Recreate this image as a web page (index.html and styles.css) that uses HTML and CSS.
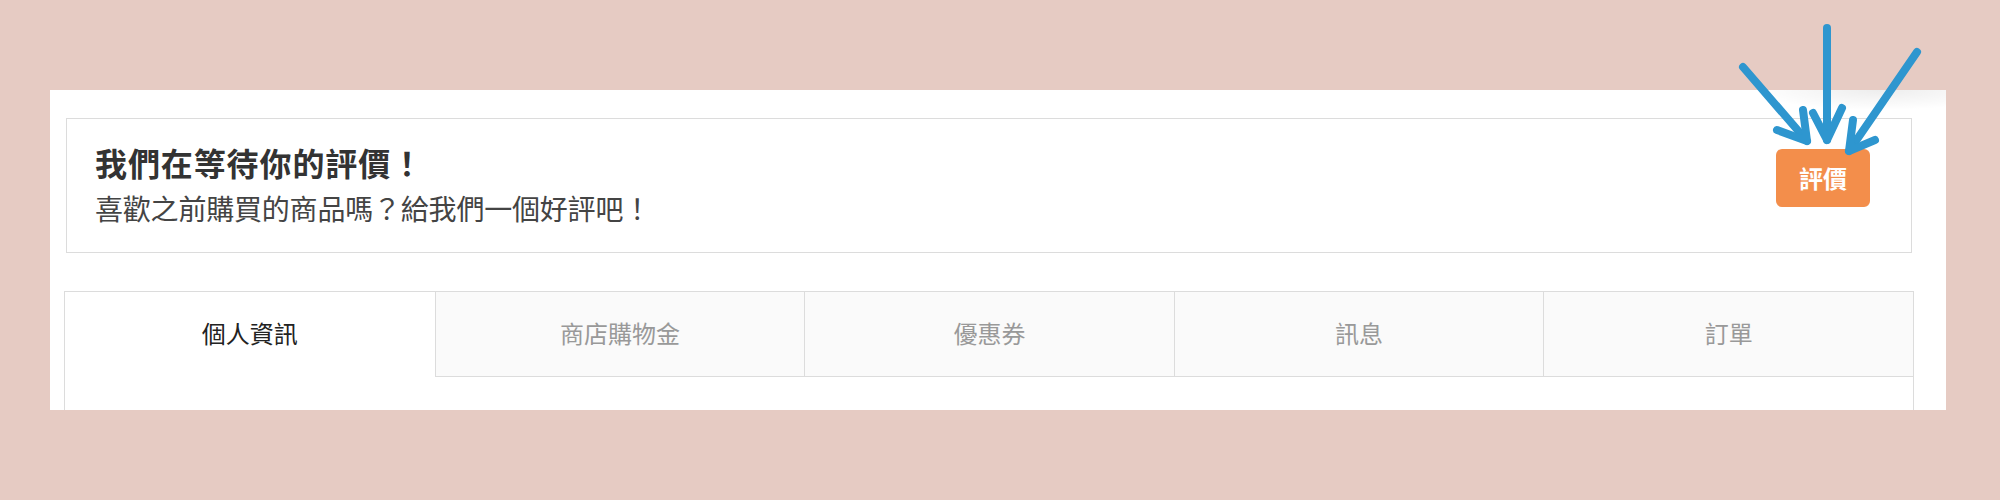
FILE: index.html
```html
<!DOCTYPE html>
<html lang="zh-Hant">
<head>
<meta charset="utf-8">
<title>會員中心</title>
<link rel="stylesheet" href="styles.css">
</head>
<body>
<div class="page">
  <div class="panel">
    <div class="review-card">
      <div class="review-text">
        <div class="review-title">我們在等待你的評價！</div>
        <div class="review-sub">喜歡之前購買的商品嗎？給我們一個好評吧！</div>
      </div>
      <button class="review-btn">評價</button>
    </div>
    <div class="tabs">
      <div class="tab tab-active">個人資訊</div>
      <div class="tab">商店購物金</div>
      <div class="tab">優惠券</div>
      <div class="tab">訊息</div>
      <div class="tab">訂單</div>
    </div>
    <div class="tab-body"></div>
  </div>
  <div class="arrow-shadow"></div>
  <svg class="arrows" viewBox="1730 20 200 145" width="200" height="145" aria-hidden="true">
    <g fill="none" stroke="#2e96cf" stroke-width="8" stroke-linecap="round" stroke-linejoin="round">
      <path d="M1743 67 L1807 141"/>
      <path d="M1803 110 L1807 141 L1777 130"/>
      <path d="M1827 28 L1827 140"/>
      <path d="M1813 113 L1827 140 L1842 108"/>
      <path d="M1917 52 L1849 151"/>
      <path d="M1853 120 L1849 151 L1875 140"/>
    </g>
  </svg>
</div>
</body>
</html>
```
FILE: styles.css
```css
html, body {
  margin: 0;
  padding: 0;
}

body {
  background: #e6cbc3;
  font-family: "Noto Sans CJK TC", "Noto Sans", sans-serif;
  overflow: hidden;
}

.page {
  position: relative;
  width: 2000px;
  height: 500px;
  padding: 90px 54px 0 50px;
  box-sizing: border-box;
}

.panel {
  background: #ffffff;
  height: 320px;
  overflow: hidden;
  box-sizing: border-box;
  padding: 28px 32px 0 14px;
  display: flex;
  flex-direction: column;
}

.review-card {
  margin: 0 2px;
  border: 1px solid #dcdcdc;
  display: flex;
  justify-content: space-between;
  align-items: flex-start;
  padding: 20px 41px 21px 28px;
}

.review-title {
  font-size: 32px;
  font-weight: 700;
  line-height: 46px;
  letter-spacing: 0.9px;
  color: #333333;
}

.review-sub {
  font-size: 28px;
  line-height: 46px;
  letter-spacing: -0.2px;
  color: #444444;
}

.review-btn {
  margin-top: 10px;
  width: 94px;
  height: 58px;
  border: none;
  border-radius: 6px;
  background: #f38e4b;
  color: #ffffff;
  font-family: inherit;
  font-size: 24px;
  font-weight: 700;
  padding: 0;
  line-height: 58px;
}

.tabs {
  margin-top: 38px;
  display: grid;
  grid-template-columns: repeat(5, 1fr);
  border: 1px solid #dcdcdc;
  border-bottom: none;
}

.tab {
  height: 84px;
  line-height: 81px;
  text-align: center;
  font-size: 24px;
  color: #999999;
  background: #fafafa;
  border-left: 1px solid #dcdcdc;
  border-bottom: 1px solid #dcdcdc;
}

.tab:first-child {
  border-left: none;
}

.tab-active {
  background: #ffffff;
  color: #222222;
  border-bottom-color: transparent;
}

.tab-body {
  flex: 1;
  min-height: 60px;
  border-left: 1px solid #dcdcdc;
  border-right: 1px solid #dcdcdc;
}

.arrow-shadow {
  position: absolute;
  left: 1760px;
  top: 90px;
  width: 186px;
  height: 20px;
  background: radial-gradient(ellipse 70% 100% at 65% 0%, rgba(0, 0, 0, 0.07), rgba(0, 0, 0, 0) 100%);
}

.arrows {
  position: absolute;
  left: 1730px;
  top: 20px;
}
```
